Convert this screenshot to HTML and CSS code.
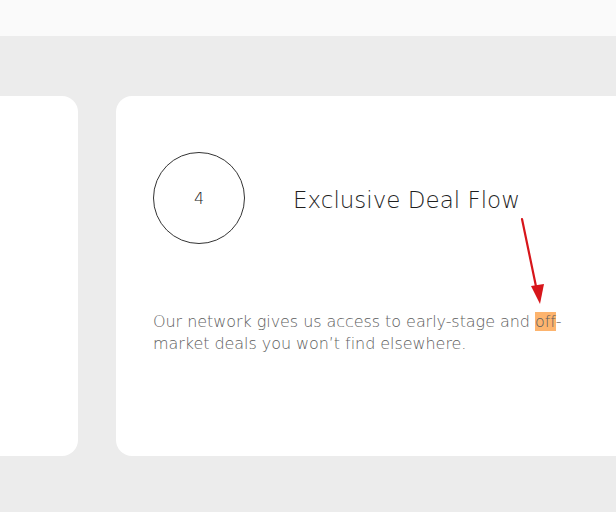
FILE: index.html
```html
<!DOCTYPE html>
<html>
<head>
<meta charset="utf-8">
<link rel="stylesheet" href="styles.css">
</head>
<body>
<header class="topbar"></header>
<main class="section">
  <div class="cards">
    <article class="card card-prev"></article>
    <article class="card">
      <div class="card-head">
        <div class="num">4</div>
        <h3 class="title">Exclusive Deal Flow</h3>
      </div>
      <p class="desc">Our network gives us access to early-stage and <mark class="hl">off</mark>-market deals you won’t find elsewhere.</p>
      <svg class="arrow" width="40" height="100" viewBox="0 0 40 100">
        <line x1="6" y1="3" x2="22" y2="80" stroke="#d7161b" stroke-width="2.2" stroke-linecap="round"/>
        <path d="M15 70 L24 88 L28 68 Z" fill="#d7161b"/>
      </svg>
    </article>
  </div>
</main>
</body>
</html>
```
FILE: styles.css
```css
html, body {
  margin: 0;
  padding: 0;
}
body {
  width: 616px;
  height: 512px;
  overflow: hidden;
  background: #ececec;
  font-family: "DejaVu Sans", "Open Sans", sans-serif;
}
.topbar {
  height: 36px;
  background: #fafafa;
}
.section {
  padding-top: 60px;
}
.cards {
  display: flex;
  gap: 38px;
  margin-left: -400px;
}
.card {
  flex: 0 0 auto;
  width: 560px;
  height: 360px;
  background: #fff;
  border-radius: 16px;
  box-sizing: border-box;
  padding: 56px 0 0 37px;
  position: relative;
}
.card-prev {
  width: 478px;
}
.card-head {
  display: flex;
  align-items: center;
  gap: 48px;
}
.num {
  width: 92px;
  height: 92px;
  box-sizing: border-box;
  border: 1px solid #333;
  border-radius: 50%;
  display: flex;
  align-items: center;
  justify-content: center;
  font-size: 16px;
  font-weight: 200;
  color: #222;
}
.title {
  margin: 4px 0 0;
  font-size: 23px;
  font-weight: 200;
  color: #1f1f1f;
}
.desc {
  margin: 67px 0 0;
  width: 432px;
  font-size: 16px;
  line-height: 22px;
  font-weight: 200;
  letter-spacing: -0.06px;
  color: #5e5e5e;
}
.hl {
  background: #fdb46e;
  color: #5e5e5e;
}
.arrow {
  position: absolute;
  left: 400px;
  top: 120px;
}
```
